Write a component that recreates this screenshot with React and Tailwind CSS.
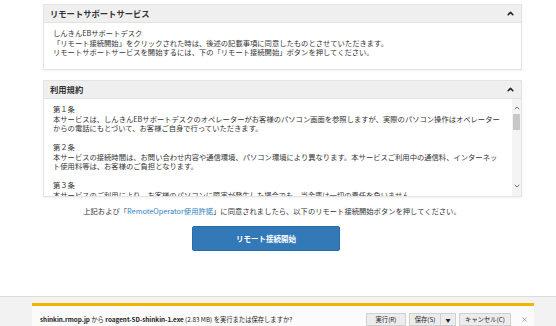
import { ChevronUp, ChevronDown, X } from "lucide-react"

const jp = { fontFamily: '"Noto Sans CJK JP", "Noto Sans", sans-serif' }

function PanelHeader({ title }) {
  return (
    <div className="flex h-[18px] items-center justify-between border-b border-[#e2e2e2] bg-[#efefef] pl-[6px] pr-[6px]">
      <span className="text-[8.3px] font-bold text-[#333]">{title}</span>
      <ChevronUp size={9} strokeWidth={4} className="text-[#222]" />
    </div>
  )
}

export default function App() {
  return (
    <div style={jp} className="flex h-[326px] w-[556px] flex-col overflow-hidden bg-white text-[#333]">
      <div className="h-[296px] shrink-0">
        <div className="ml-[43px] mt-[4px] w-[479px] border border-[#e4e4e4] bg-white shadow-[0_1px_2px_rgba(0,0,0,0.06)]">
          <PanelHeader title="リモートサポートサービス" />
          <div className="px-[9px] pb-[11px] pt-[6px] text-[7.3px] leading-[9.7px]">
            <p>しんきんEBサポートデスク</p>
            <p>「リモート接続開始」をクリックされた時は、後述の記載事項に同意したものとさせていただきます。</p>
            <p>リモートサポートサービスを開始するには、下の「リモート接続開始」ボタンを押してください。</p>
          </div>
        </div>

        <div className="ml-[43px] mt-[10px] w-[479px] border border-[#e4e4e4] bg-white shadow-[0_1px_2px_rgba(0,0,0,0.06)]">
          <PanelHeader title="利用規約" />
          <div className="flex h-[97px]">
            <div className="flex-1 overflow-hidden pl-[9px] pr-[8px] pt-[6px] text-[7.3px] leading-[9.5px]">
              <p>第１条</p>
              <p>本サービスは、しんきんEBサポートデスクのオペレーターがお客様のパソコン画面を参照しますが、実際のパソコン操作はオペレーターからの電話にもとづいて、お客様ご自身で行っていただきます。</p>
              <p className="mt-[9.5px]">第２条</p>
              <p>本サービスの接続時間は、お問い合わせ内容や通信環境、パソコン環境により異なります。本サービスご利用中の通信料、インターネット使用料等は、お客様のご負担となります。</p>
              <p className="mt-[9.5px]">第３条</p>
              <p>本サービスのご利用により、お客様のパソコンに障害が発生した場合でも、当金庫は一切の責任を負いません。</p>
            </div>
            <div className="flex w-[9px] flex-col items-center bg-[#f4f4f4]">
              <ChevronUp size={8} strokeWidth={2.5} className="mt-[5px] text-[#555]" />
              <div className="mt-[2px] h-[16px] w-[7px] bg-[#c8c8c8]" />
              <div className="flex-1" />
              <ChevronDown size={8} strokeWidth={2.5} className="mb-[6px] text-[#555]" />
            </div>
          </div>
        </div>

        <p className="mt-[9px] w-[544px] text-center text-[7.3px] leading-[10px]">
          上記および「<span className="text-[#2f7fc1]">RemoteOperator使用許諾</span>」に同意されましたら、以下のリモート接続開始ボタンを押してください。
        </p>

        <button className="ml-[192px] mt-[10px] flex h-[25px] w-[148px] items-center justify-center rounded-[2px] border border-[#2a6aa6] bg-[#3379b8] text-[7.5px] font-bold text-white">
          リモート接続開始
        </button>
      </div>

      <div className="flex-1 border-t border-[#dcdcdc] bg-[#f2f2f2] pt-[6px]">
        <div className="ml-[32px] flex h-[30px] w-[502px] items-center border-t-[3px] border-[#f0b400] bg-[#fbfbfb] pl-[8px] pr-[4px] text-[6.3px] text-[#222]">
          <span className="flex-1">
            <b className="font-semibold">shinkin.rmop.jp</b> から <b className="font-semibold">roagent-SD-shinkin-1.exe</b> (2.83 MB) を実行または保存しますか?
          </span>
          <div className="flex items-center">
            <span className="flex h-[13px] w-[40px] items-center justify-center border border-[#d0d0d0] bg-[#ececec]">実行(R)</span>
            <span className="ml-[3px] flex h-[13px] w-[32px] items-center justify-center border border-[#d0d0d0] bg-[#ececec]">保存(S)</span>
            <span className="flex h-[13px] w-[15px] items-center justify-center border border-l-0 border-[#d0d0d0] bg-[#ececec] text-[5px]">▼</span>
            <span className="ml-[3px] flex h-[13px] w-[52px] items-center justify-center border border-[#d0d0d0] bg-[#ececec]">キャンセル(C)</span>
            <X size={7} strokeWidth={2} className="ml-[10px] mr-[2px] text-[#777]" />
          </div>
        </div>
      </div>
    </div>
  )
}
